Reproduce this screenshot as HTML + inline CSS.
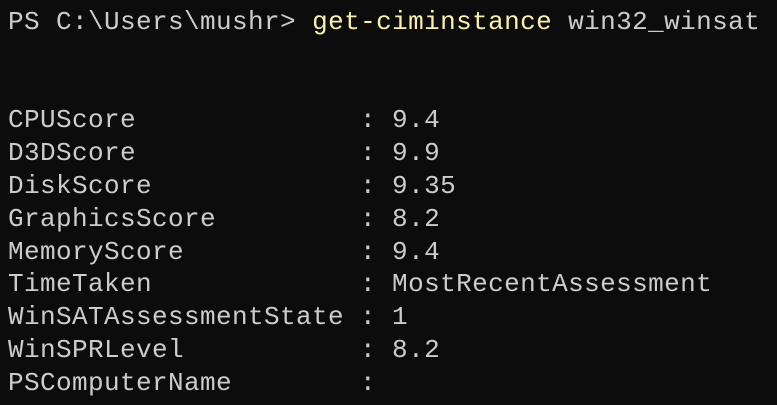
<!DOCTYPE html>
<html><head><meta charset="utf-8"><style>
html,body{margin:0;padding:0;background:#0c0c0c;width:777px;height:405px;overflow:hidden}
pre{margin:0;padding:6px 0 0 8px;font-family:"Liberation Mono",monospace;font-size:26px;letter-spacing:0.4px;line-height:32.8px;color:#cccccc;white-space:pre}
.y{color:#f9f1a5}
</style></head><body><pre>PS C:\Users\mushr&gt; <span class="y">get-ciminstance</span> win32_winsat


CPUScore              : 9.4
D3DScore              : 9.9
DiskScore             : 9.35
GraphicsScore         : 8.2
MemoryScore           : 9.4
TimeTaken             : MostRecentAssessment
WinSATAssessmentState : 1
WinSPRLevel           : 8.2
PSComputerName        :</pre></body></html>
